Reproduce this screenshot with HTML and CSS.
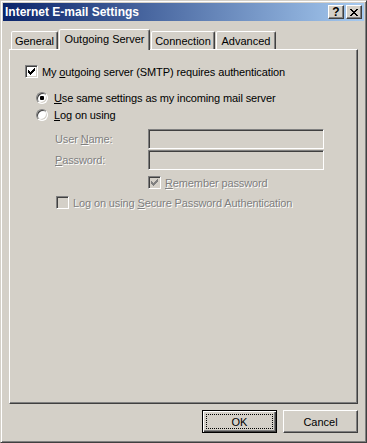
FILE: index.html
```html
<!DOCTYPE html>
<html lang="en">
<head>
  <meta charset="UTF-8">
  <title>Internet E-mail Settings</title>
  <link rel="stylesheet" href="styles.css">
</head>
<body>

<div class="window">
  <div class="titlebar">
    <span class="title">Internet E-mail Settings</span>
    <span class="cap-btn help">?</span>
    <span class="cap-btn close">
      <svg width="8" height="7" viewBox="0 0 8 7" shape-rendering="crispEdges"><path d="M0 0h2v1h-2zM6 0h2v1h-2zM1 1h2v1h-2zM5 1h2v1h-2zM2 2h4v1h-4zM3 3h2v1h-2zM2 4h4v1h-4zM1 5h2v1h-2zM5 5h2v1h-2zM0 6h2v1h-2zM6 6h2v1h-2z" fill="#000"/></svg>
    </span>
  </div>

  <div class="tabs">
    <div class="tab tab-general">General</div>
    <div class="tab tab-outgoing active">Outgoing Server</div>
    <div class="tab tab-connection">Connection</div>
    <div class="tab tab-advanced">Advanced</div>
  </div>

  <div class="panel">
    <div class="row row-auth">
      <span class="check">
        <svg width="7" height="7" viewBox="0 0 7 7" shape-rendering="crispEdges"><path d="M6 0h1v1h-1zM5 1h2v1h-2zM0 2h1v1h-1zM4 2h3v1h-3zM0 3h2v1h-2zM3 3h3v1h-3zM0 4h5v1h-5zM1 5h3v1h-3zM2 6h1v1h-1z"/></svg>
      </span>
      <span>My <u>o</u>utgoing server (SMTP) requires authentication</span>
    </div>

    <div class="row row-radio first">
      <span class="radio on"></span>
      <span><u>U</u>se same settings as my incoming mail server</span>
    </div>
    <div class="row row-radio second">
      <span class="radio"></span>
      <span><u>L</u>og on using</span>
    </div>

    <div class="row field first">
      <span class="field-label dis">User <u>N</u>ame:</span>
      <span class="input"></span>
    </div>
    <div class="row field second">
      <span class="field-label dis"><u>P</u>assword:</span>
      <span class="input"></span>
    </div>

    <div class="row row-remember">
      <span class="check off">
        <svg width="7" height="7" viewBox="0 0 7 7" shape-rendering="crispEdges"><path d="M6 0h1v1h-1zM5 1h2v1h-2zM0 2h1v1h-1zM4 2h3v1h-3zM0 3h2v1h-2zM3 3h3v1h-3zM0 4h5v1h-5zM1 5h3v1h-3zM2 6h1v1h-1z"/></svg>
      </span>
      <span class="dis"><u>R</u>emember password</span>
    </div>

    <div class="row row-secure">
      <span class="check off"></span>
      <span class="dis">Log on using <u>S</u>ecure Password Authentication</span>
    </div>
  </div>

  <div class="buttons">
    <button class="btn default"><span class="focus">OK</span></button>
    <button class="btn">Cancel</button>
  </div>
</div>

</body>
</html>
```

FILE: styles.css
```css
* { box-sizing: border-box; }
body {
  margin: 0;
  font-family: "Liberation Sans", Arial, sans-serif;
  font-size: 11px;
  color: #000;
  background: #d4d0c8;
}
u { text-underline-offset: 1px; }

.window {
  width: 367px;
  height: 443px;
  background: #d4d0c8;
  border: 1px solid;
  border-color: #d4d0c8 #404040 #404040 #d4d0c8;
  box-shadow: inset 1px 1px #fff, inset -1px -1px #808080;
  padding: 2px;
}

/* title bar */
.titlebar {
  height: 18px;
  display: flex;
  align-items: center;
  padding: 0 2px;
  background: linear-gradient(90deg, #0a246a, #a6caf0);
  color: #fff;
  font-weight: bold;
  font-size: 12px;
}
.title { flex: 1; }
.cap-btn {
  width: 16px;
  height: 14px;
  display: flex;
  align-items: center;
  justify-content: center;
  background: #d4d0c8;
  border: 1px solid;
  border-color: #fff #404040 #404040 #fff;
  box-shadow: inset -1px -1px #808080;
  color: #000;
  font-size: 12px;
}
.cap-btn + .cap-btn { margin-left: 2px; }
.cap-btn svg { display: block; }

/* tabs */
.tabs {
  height: 20px;
  margin-top: 8px;
  padding-left: 8px;
  display: flex;
  align-items: flex-end;
  gap: 1px;
}
.tab {
  height: 18px;
  display: flex;
  align-items: center;
  justify-content: center;
  border: 1px solid;
  border-bottom: 0;
  border-color: #fff #404040 transparent #fff;
  border-radius: 2px 2px 0 0;
  box-shadow: inset -1px 0 #808080;
  background: #d4d0c8;
  padding-top: 1px;
}
.tab.active {
  height: 21px;
  margin-bottom: -1px;
  position: relative;
  z-index: 1;
  padding-top: 0;
  padding-bottom: 2px;
}
.tab-general { width: 47px; }
.tab-outgoing { width: 91px; }
.tab-connection { width: 64px; }
.tab-advanced { width: 60px; }

/* panel */
.panel {
  margin-left: 6px;
  width: 349px;
  height: 355px;
  border: 1px solid;
  border-color: #fff #404040 #404040 #fff;
  box-shadow: inset -1px -1px #808080;
  padding-top: 15px;
  letter-spacing: -0.12px;
}
.row {
  display: flex;
  align-items: center;
  white-space: nowrap;
}
.row-auth { height: 13px; padding-left: 15px; }
.row-radio { height: 12px; padding-left: 26px; }
.row-radio.first { margin-top: 14px; }
.row-radio.second { margin-top: 5px; }
.field { height: 20px; padding-left: 45px; }
.field.first { margin-top: 8px; }
.field.second { margin-top: 1px; }
.row-remember { height: 13px; padding-left: 138px; margin-top: 6px; }
.row-secure { height: 13px; padding-left: 46px; margin-top: 7px; }

.dis {
  color: #808080;
  text-shadow: 1px 1px 0 #fff;
}
.field-label { width: 93px; }

.input {
  width: 176px;
  height: 20px;
  border: 1px solid;
  border-color: #808080 #fff #fff #808080;
  box-shadow: inset 1px 1px #404040, inset -1px -1px #d4d0c8;
  background: #d4d0c8;
}

.check {
  width: 13px;
  height: 13px;
  flex: none;
  margin-right: 4px;
  padding: 2px;
  border: 1px solid;
  border-color: #808080 #fff #fff #808080;
  box-shadow: inset 1px 1px #404040, inset -1px -1px #d4d0c8;
  background: #fff;
}
.check svg { display: block; fill: #000; }
.check.off { background: #d4d0c8; }
.check.off svg { fill: #808080; }

.radio {
  width: 12px;
  height: 12px;
  flex: none;
  margin-right: 6px;
  border-radius: 50%;
  border: 1px solid;
  border-color: #808080 #fff #fff #808080;
  box-shadow: inset 1px 1px #404040, inset -1px -1px #d4d0c8;
  background: #fff;
  display: flex;
  align-items: center;
  justify-content: center;
}
.radio.on::after {
  content: "";
  width: 4px;
  height: 4px;
  border-radius: 1px;
  background: #000;
}

/* dialog buttons */
.buttons {
  display: flex;
  justify-content: flex-end;
  gap: 6px;
  margin-top: 6px;
  padding-right: 6px;
}
.btn {
  width: 75px;
  height: 23px;
  padding: 0;
  font: inherit;
  color: #000;
  background: #d4d0c8;
  border: 1px solid;
  border-color: #fff #404040 #404040 #fff;
  box-shadow: inset -1px -1px #808080;
  display: flex;
  align-items: center;
  justify-content: center;
}
.btn.default {
  border-color: #000;
  box-shadow: inset 1px 1px #fff, inset -1px -1px #404040, inset -2px -2px #808080;
  padding: 3px;
}
.focus {
  flex: 1;
  align-self: stretch;
  border: 1px dotted #000;
  display: flex;
  align-items: center;
  justify-content: center;
}
```
